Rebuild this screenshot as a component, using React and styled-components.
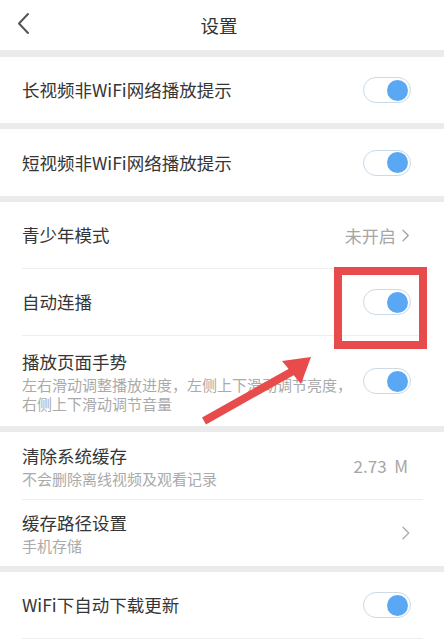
import React from "react"
import styled, { createGlobalStyle } from "styled-components"

const GlobalStyle = createGlobalStyle`
  html, body {
    margin: 0;
    padding: 0;
    background: #ebebeb;
  }
  body {
    font-family: "Noto Sans CJK SC", "Noto Sans", sans-serif;
    color: #333;
  }
`

const Page = styled.div`
  position: relative;
  width: 444px;
  height: 644px;
  overflow: hidden;
  background: #ebebeb;
`

const Header = styled.div`
  height: 50px;
  background: #fff;
  display: flex;
  align-items: center;
  justify-content: center;
  position: relative;
`

const BackButton = styled.div`
  position: absolute;
  left: 16px;
  top: 12px;
  width: 16px;
  height: 24px;
  display: flex;
`

const Title = styled.div`
  font-size: 18.5px;
  color: #333;
  margin-right: 6px;
`

const Group = styled.div`
  background: #fff;
  margin-top: ${(p) => p.gap || 7}px;
`

const Row = styled.div`
  position: relative;
  min-height: ${(p) => p.h || 66}px;
  display: flex;
  align-items: center;
  justify-content: space-between;
  padding: ${(p) => (p.tall ? "13px 33px 13px 22px" : "0 33px 0 22px")};
  box-sizing: border-box;
  border-top: ${(p) => (p.first ? "none" : "1px solid transparent")};

  &::before {
    content: "";
    display: ${(p) => (p.first ? "none" : "block")};
    position: absolute;
    left: 22px;
    right: 21px;
    top: -1px;
    height: 1px;
    background: #eeeeee;
  }
`

const Texts = styled.div`
  display: flex;
  flex-direction: column;
  min-width: 0;
`

const Label = styled.div`
  font-size: 17.5px;
  line-height: 24px;
  color: #363636;
`

const Sub = styled.div`
  font-size: 15px;
  line-height: 19px;
  color: #aaa;
  margin-top: 1px;
  max-width: ${(p) => p.max || 400}px;
`

const Value = styled.div`
  font-size: ${(p) => p.size || 17}px;
  color: #a6a6a6;
  display: flex;
  align-items: center;
  gap: 6px;
  white-space: pre;
  margin-right: ${(p) => p.mr || 0}px;
`

const Track = styled.div`
  flex-shrink: 0;
  width: 48px;
  height: 26px;
  border-radius: 13px;
  border: 1px solid #c9dbe9;
  box-sizing: border-box;
  background: #fff;
  display: flex;
  align-items: center;
  justify-content: flex-end;
  padding-right: 2px;
`

const Thumb = styled.div`
  width: 21px;
  height: 21px;
  border-radius: 50%;
  background: #5aa8f4;
`

const Highlight = styled.div`
  position: absolute;
  left: 334px;
  top: 267px;
  width: 93px;
  height: 82px;
  border: 8px solid #e84b4c;
  box-sizing: border-box;
`

const ArrowLayer = styled.svg`
  position: absolute;
  left: 0;
  top: 0;
  pointer-events: none;
`

const Toggle = () => (
  <Track>
    <Thumb />
  </Track>
)

const Chevron = ({ size = 14, color = "#aaa" }) => (
  <svg width={size * 0.55} height={size} viewBox="0 0 8 14" fill="none">
    <path d="M1 1l6 6-6 6" stroke={color} strokeWidth="1.3" strokeLinecap="round" strokeLinejoin="round" />
  </svg>
)

export default function App() {
  return (
    <Page>
      <GlobalStyle />
      <Header>
        <BackButton>
          <svg width="16" height="24" viewBox="0 0 16 24" fill="none">
            <path d="M12 2L3 11.5 12 21" stroke="#555" strokeWidth="2" strokeLinecap="round" strokeLinejoin="round" />
          </svg>
        </BackButton>
        <Title>设置</Title>
      </Header>

      <Group gap={7}>
        <Row first>
          <Label>长视频非WiFi网络播放提示</Label>
          <Toggle />
        </Row>
      </Group>

      <Group gap={6}>
        <Row first h={67}>
          <Label>短视频非WiFi网络播放提示</Label>
          <Toggle />
        </Row>
      </Group>

      <Group gap={6}>
        <Row first>
          <Label>青少年模式</Label>
          <Value mr={2}>
            未开启
            <Chevron size={13} color="#999" />
          </Value>
        </Row>
        <Row h={67}>
          <Label>自动连播</Label>
          <Toggle />
        </Row>
        <Row h={91} tall>
          <Texts>
            <Label>播放页面手势</Label>
            <Sub max={330}>左右滑动调整播放进度，左侧上下滑动调节亮度，右侧上下滑动调节音量</Sub>
          </Texts>
          <Toggle />
        </Row>
      </Group>

      <Group gap={6}>
        <Row first h={67}>
          <Texts>
            <Label>清除系统缓存</Label>
            <Sub>不会删除离线视频及观看记录</Sub>
          </Texts>
          <Value mr={3}>2.73  M</Value>
        </Row>
        <Row h={67}>
          <Texts>
            <Label>缓存路径设置</Label>
            <Sub>手机存储</Sub>
          </Texts>
          <Value mr={1}>
            <Chevron size={14} color="#aaa" />
          </Value>
        </Row>
      </Group>

      <Group gap={6}>
        <Row first h={66}>
          <Label>WiFi下自动下载更新</Label>
          <Toggle />
        </Row>
        <Row h={20} />
      </Group>

      <Highlight />
      <ArrowLayer width="444" height="644" viewBox="0 0 444 644">
        <line x1="204" y1="421" x2="293" y2="371" stroke="#e84b4c" strokeWidth="8" strokeLinecap="butt" />
        <polygon points="282,361 311,357 301,384" fill="#e84b4c" />
      </ArrowLayer>
    </Page>
  )
}
